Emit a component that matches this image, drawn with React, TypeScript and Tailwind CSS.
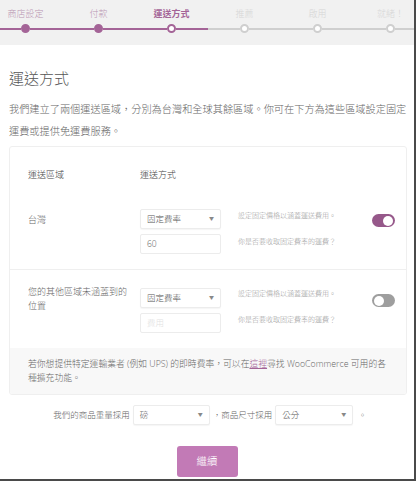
import { type ReactNode } from "react";

const font = { fontFamily: '"Open Sans", "Noto Sans CJK TC", sans-serif' };

const steps = [
  { label: "商店設定", state: "done" },
  { label: "付款", state: "done" },
  { label: "運送方式", state: "current" },
  { label: "推薦", state: "todo" },
  { label: "啟用", state: "todo" },
  { label: "就緒！", state: "todo" },
] as const;

function Step({ label, state }: { label: string; state: "done" | "current" | "todo" }) {
  const line = state === "todo" ? "bg-[#cfcfcf]" : "bg-[#a46497]";
  const labelClass =
    state === "current"
      ? "text-[#a46497] font-semibold"
      : state === "done"
        ? "text-[#b995b2]"
        : "text-[#d6d6d6]";
  const dot =
    state === "done"
      ? "bg-[#a46497] border-[#a46497]"
      : state === "current"
        ? "bg-white border-[#a46497]"
        : "bg-white border-[#cfcfcf]";

  return (
    <div className="flex w-[73px] shrink-0 flex-col items-center">
      <span className={`h-[16px] text-[9px] leading-[16px] ${labelClass}`}>{label}</span>
      <div className="mt-[2px] flex w-full items-center">
        <div className={`h-[2px] flex-1 ${line}`} />
        <div className={`h-[9px] w-[9px] rounded-full border-2 ${dot}`} />
        <div className={`h-[2px] flex-1 ${line}`} />
      </div>
    </div>
  );
}

function Select({ value, width }: { value: string; width: string }) {
  return (
    <div
      className={`flex h-[20px] ${width} items-center justify-between rounded-[2px] border border-[#ececec] bg-white px-[6px] text-[8.5px] text-[#555] shadow-[0_1px_1px_rgba(0,0,0,0.04)]`}
    >
      <span>{value}</span>
      <span className="text-[5px] text-[#888]">▼</span>
    </div>
  );
}

function Toggle({ on }: { on: boolean }) {
  return (
    <div
      className={`flex h-[13px] w-[23px] items-center rounded-full px-[2px] ${
        on ? "justify-end bg-[#96588a]" : "justify-start bg-[#9e9e9e]"
      }`}
    >
      <div className="h-[10px] w-[10px] rounded-full bg-white" />
    </div>
  );
}

function ZoneRow({
  zone,
  value,
  on,
  zoneOffset,
  descOffset,
  toggleOffset,
}: {
  zone: ReactNode;
  value: string;
  on: boolean;
  zoneOffset: string;
  descOffset: string;
  toggleOffset: string;
}) {
  return (
    <div className="flex px-[18px]">
      <div className={`w-[112px] shrink-0 text-[9px] leading-[14px] text-[#666] ${zoneOffset}`}>{zone}</div>
      <div className="flex w-[98px] shrink-0 flex-col gap-[5px]">
        <Select value="固定費率" width="w-[81px]" />
        <div
          className={`flex h-[20px] w-[81px] items-center rounded-[2px] border border-[#ececec] px-[6px] text-[8.5px] ${
            value ? "text-[#555]" : "text-[#e2e2e2]"
          }`}
        >
          {value || "費用"}
        </div>
      </div>
      <div className={`flex w-[134px] shrink-0 flex-col gap-[16px] text-[7px] leading-[10px] text-[#999] ${descOffset}`}>
        <span>設定固定價格以涵蓋運送費用。</span>
        <span>你是否要收取固定費率的運費？</span>
      </div>
      <div className={toggleOffset}>
        <Toggle on={on} />
      </div>
    </div>
  );
}

export default function App() {
  return (
    <div className="h-[484px] w-[418px] bg-white font-light" style={font}>
      <div className="h-[481px] w-[416px] overflow-hidden border-r-[2px] border-b-[2px] border-[#4a4a4a] bg-white">
        <div className="h-[45px] overflow-hidden bg-[#f1f1f1] pt-[6px]">
          <div className="ml-[-11px] flex">
            {steps.map((s) => (
              <Step key={s.label} label={s.label} state={s.state} />
            ))}
          </div>
        </div>

        <div className="px-[9px]">
          <h1 className="mt-[22px] text-[15px] leading-[22px] text-[#555]">運送方式</h1>
          <p className="mt-[9px] w-[406px] text-[10.2px] leading-[22px] text-[#666]">
            我們建立了兩個運送區域，分別為台灣和全球其餘區域。你可在下方為這些區域設定固定
            <br />
            運費或提供免運費服務。
          </p>

          <div className="mt-[4px] w-[398px] rounded-[3px] border border-[#efefef]">
            <div className="flex px-[18px] pt-[21px] text-[9px] leading-[13px] text-[#444]">
              <span className="w-[112px]">運送區域</span>
              <span>運送方式</span>
            </div>
            <div className="pt-[28px] pb-[15px]">
              <ZoneRow zone="台灣" value="60" on zoneOffset="pt-[4px]" descOffset="pt-[2px]" toggleOffset="pt-[5px]" />
            </div>
            <div className="border-t border-[#efefef] pt-[18px] pb-[15px]">
              <ZoneRow
                zone={<>您的其他區域未涵蓋到的<br />位置</>}
                value=""
                on={false}
                zoneOffset="mt-[-3px]"
                descOffset="pt-[1px]"
                toggleOffset="pt-[6px]"
              />
            </div>
            <div className="rounded-b-[3px] bg-[#f8f8f8] px-[18px] pt-[9px] pb-[9px] text-[8.8px] leading-[14px] text-[#666]">
              若你想提供特定運輸業者 (例如 UPS) 的即時費率，可以在<span className="text-[#a46497] underline">這裡</span>尋找 WooCommerce 可用的各種擴充功能。
            </div>
          </div>
        </div>

        <div className="mt-[10px] flex items-center justify-center pl-[6px] text-[8.5px] text-[#666]">
          <span className="mr-[3px]">我們的商品重量採用</span>
          <Select value="磅" width="w-[77px]" />
          <span className="mx-[3px]">，商品尺寸採用</span>
          <Select value="公分" width="w-[78px]" />
          <span className="ml-[5px]">。</span>
        </div>

        <div className="mt-[21px] flex justify-center">
          <button className="h-[31px] w-[61px] rounded-[3px] bg-[#c27ab6] text-[10.5px] text-white">繼續</button>
        </div>
      </div>
    </div>
  );
}
